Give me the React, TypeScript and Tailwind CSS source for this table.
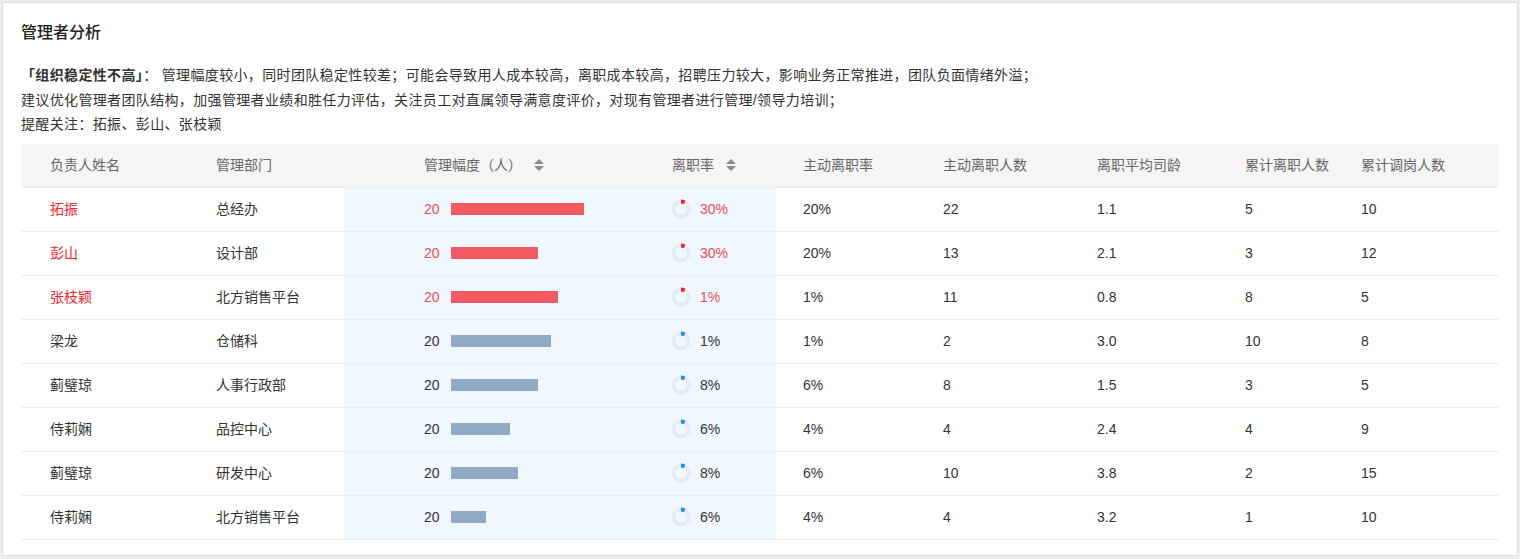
import React from "react";

type Row = {
  name: string;
  dept: string;
  span: number;
  bar: number;
  rate: string;
  activeRate: string;
  activeCount: string;
  tenure: string;
  totalLeft: string;
  totalMoved: string;
  alert?: boolean;
};

const rows: Row[] = [
  { name: "拓振", dept: "总经办", span: 20, bar: 133, rate: "30%", activeRate: "20%", activeCount: "22", tenure: "1.1", totalLeft: "5", totalMoved: "10", alert: true },
  { name: "彭山", dept: "设计部", span: 20, bar: 87, rate: "30%", activeRate: "20%", activeCount: "13", tenure: "2.1", totalLeft: "3", totalMoved: "12", alert: true },
  { name: "张枝颖", dept: "北方销售平台", span: 20, bar: 107, rate: "1%", activeRate: "1%", activeCount: "11", tenure: "0.8", totalLeft: "8", totalMoved: "5", alert: true },
  { name: "梁龙", dept: "仓储科", span: 20, bar: 100, rate: "1%", activeRate: "1%", activeCount: "2", tenure: "3.0", totalLeft: "10", totalMoved: "8" },
  { name: "蓟璧琼", dept: "人事行政部", span: 20, bar: 87, rate: "8%", activeRate: "6%", activeCount: "8", tenure: "1.5", totalLeft: "3", totalMoved: "5" },
  { name: "侍莉娴", dept: "品控中心", span: 20, bar: 59, rate: "6%", activeRate: "4%", activeCount: "4", tenure: "2.4", totalLeft: "4", totalMoved: "9" },
  { name: "蓟璧琼", dept: "研发中心", span: 20, bar: 67, rate: "8%", activeRate: "6%", activeCount: "10", tenure: "3.8", totalLeft: "2", totalMoved: "15" },
  { name: "侍莉娴", dept: "北方销售平台", span: 20, bar: 35, rate: "6%", activeRate: "4%", activeCount: "4", tenure: "3.2", totalLeft: "1", totalMoved: "10" },
];

function SortIcon() {
  return (
    <svg width="12" height="14" viewBox="0 0 12 14" className="ml-[11px]">
      <path d="M6 1 L11 6 L1 6 Z" fill="#8c8c8c" />
      <path d="M1 8 L11 8 L6 13 Z" fill="#8c8c8c" />
    </svg>
  );
}

function Donut({ alert }: { alert?: boolean }) {
  const r = 7.5;
  const c = 2 * Math.PI * r;
  return (
    <svg width="20" height="20" viewBox="0 0 20 20" className="shrink-0">
      <circle cx="10" cy="10" r={r} fill="none" stroke="#e6ebf3" strokeWidth="4" />
      <circle
        cx="10"
        cy="10"
        r={r}
        fill="none"
        stroke={alert ? "#f5222d" : "#1890ff"}
        strokeWidth="4"
        strokeDasharray={`${c * 0.08} ${c}`}
        transform="rotate(-90 10 10)"
      />
    </svg>
  );
}

const cols = "grid grid-cols-[167px_156px_300px_132px_139px_154px_148px_116px_166px]";

export default function App() {
  return (
    <div
      className="bg-[#eeeeee] p-[2px] w-[1520px] h-[559px]"
      style={{ fontFamily: '"Liberation Sans", "Noto Sans CJK SC", sans-serif' }}
    >
      <div className="bg-white border border-[#dddddd] h-[554px] pl-[18px] pr-[17px] pt-[18px]">
        <div className="text-[16px] leading-[24px] font-medium text-[#222]">管理者分析</div>
        <div className="mt-[18px] text-[14px] leading-[24.5px] text-[#333] tracking-[0.35px]">
          <div>
            <span className="font-bold">「组织稳定性不高」</span>：
            管理幅度较小，同时团队稳定性较差；可能会导致用人成本较高，离职成本较高，招聘压力较大，影响业务正常推进，团队负面情绪外溢；
          </div>
          <div>建议优化管理者团队结构，加强管理者业绩和胜任力评估，关注员工对直属领导满意度评价，对现有管理者进行管理/领导力培训；</div>
          <div>提醒关注：拓振、彭山、张枝颖</div>
        </div>

        <div className="mt-[7px] w-[1478px] text-[14px]">
          <div className={`${cols} h-[44px] bg-[#f5f5f5] text-[#666] border-b border-[#ebebeb]`}>
            <div className="flex items-center pl-[29px]">负责人姓名</div>
            <div className="flex items-center pl-[28px]">管理部门</div>
            <div className="flex items-center pl-[80px]">
              管理幅度（人）
              <SortIcon />
            </div>
            <div className="flex items-center pl-[28px]">
              离职率
              <SortIcon />
            </div>
            <div className="flex items-center pl-[27px]">主动离职率</div>
            <div className="flex items-center pl-[28px]">主动离职人数</div>
            <div className="flex items-center pl-[28px]">离职平均司龄</div>
            <div className="flex items-center pl-[28px]">累计离职人数</div>
            <div className="flex items-center pl-[28px]">累计调岗人数</div>
          </div>

          {rows.map((r, i) => (
            <div key={i} className={`${cols} h-[44px] border-b border-[#ebebeb] text-[#333]`}>
              <div className={`flex items-center pl-[29px] ${r.alert ? "text-[#f5222d]" : ""}`}>{r.name}</div>
              <div className="flex items-center pl-[28px]">{r.dept}</div>
              <div className="flex items-center pl-[80px] bg-[#f0f7fe]">
                <span className={`w-[27px] ${r.alert ? "text-[#f04b51]" : ""}`}>{r.span}</span>
                <div
                  className={`h-[12px] ${r.alert ? "bg-[#f05a60]" : "bg-[#8eaac4]"}`}
                  style={{ width: r.bar }}
                />
              </div>
              <div className="flex items-center pl-[27px] bg-[#f0f7fe]">
                <Donut alert={r.alert} />
                <span className={`ml-[9px] ${r.alert ? "text-[#f04b51]" : ""}`}>{r.rate}</span>
              </div>
              <div className="flex items-center pl-[27px]">{r.activeRate}</div>
              <div className="flex items-center pl-[28px]">{r.activeCount}</div>
              <div className="flex items-center pl-[28px]">{r.tenure}</div>
              <div className="flex items-center pl-[28px]">{r.totalLeft}</div>
              <div className="flex items-center pl-[28px]">{r.totalMoved}</div>
            </div>
          ))}
        </div>
      </div>
    </div>
  );
}
